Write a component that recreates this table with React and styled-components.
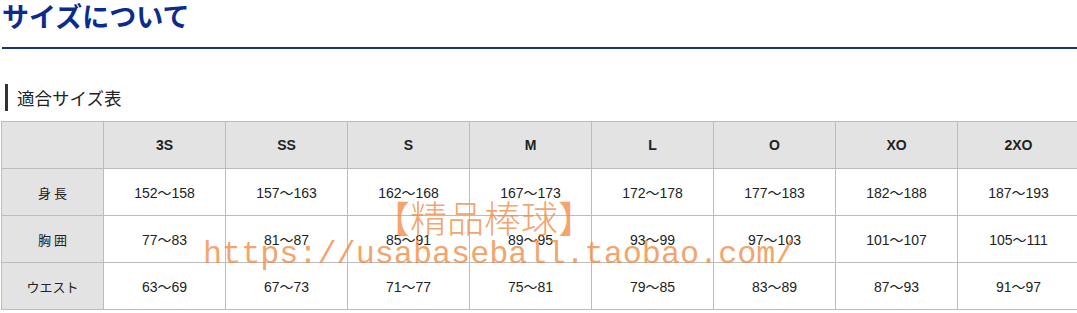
import React from "react";
import styled, { createGlobalStyle } from "styled-components";

const GlobalStyle = createGlobalStyle`
  html, body {
    margin: 0;
    padding: 0;
    background: #fff;
    overflow: hidden;
  }
  body {
    font-family: "Liberation Sans", "Noto Sans CJK JP", sans-serif;
  }
`;

const sizes = ["3S", "SS", "S", "M", "L", "O", "XO", "2XO"];

const rows = [
  {
    label: "身 長",
    values: ["152～158", "157～163", "162～168", "167～173", "172～178", "177～183", "182～188", "187～193"],
  },
  {
    label: "胸 囲",
    values: ["77～83", "81～87", "85～91", "89～95", "93～99", "97～103", "101～107", "105～111"],
  },
  {
    label: "ウエスト",
    values: ["63～69", "67～73", "71～77", "75～81", "79～85", "83～89", "87～93", "91～97"],
  },
];

const App = () => {
  return (
    <Page>
      <GlobalStyle />
      <Title>サイズについて</Title>
      <Rule />
      <SubTitle>適合サイズ表</SubTitle>
      <TableWrap>
        <SizeTable>
          <thead>
            <tr>
              <HeadCell $first />
              {sizes.map((s) => (
                <HeadCell key={s}>{s}</HeadCell>
              ))}
            </tr>
          </thead>
          <tbody>
            {rows.map((row) => (
              <tr key={row.label}>
                <LabelCell>{row.label}</LabelCell>
                {row.values.map((v, i) => (
                  <ValueCell key={i}>{v}</ValueCell>
                ))}
              </tr>
            ))}
          </tbody>
        </SizeTable>
        {/* shop watermark laid over the table */}
        <Watermark>
          <Shop>【精品棒球】</Shop>
          <Url>https://usabaseball.taobao.com/</Url>
        </Watermark>
      </TableWrap>
    </Page>
  );
};

export default App;

const Page = styled.div`
  width: 1077px;
  height: 313px;
  overflow: hidden;
`;
const Title = styled.h1`
  margin: 0;
  padding: 0 0 0 2px;
  height: 32px;
  line-height: 32px;
  font-family: "Noto Sans CJK JP", sans-serif;
  font-size: 27px;
  font-weight: 700;
  color: #0b2c8e;
`;
const Rule = styled.div`
  margin: 15px 0 0 2px;
  height: 2px;
  background: #16346f;
`;
const SubTitle = styled.h2`
  margin: 35px 0 0 5px;
  padding-left: 9px;
  height: 27px;
  line-height: 27px;
  border-left: 3px solid #333;
  font-family: "Noto Sans CJK JP", sans-serif;
  font-size: 17.5px;
  font-weight: 400;
  color: #222;
`;
const TableWrap = styled.div`
  position: relative;
  margin: 10px 0 0 1px;
  width: 1079px;
`;
const SizeTable = styled.table`
  border-collapse: collapse;
  table-layout: fixed;
  width: 1079px;
`;
const Cell = styled.td`
  border: 1px solid #bcbcbc;
  text-align: center;
  padding: 0;
  height: 46px;
`;
const HeadCell = styled(Cell).attrs({ as: "th" })`
  width: ${(p) => (p.$first ? "101px" : "121px")};
  height: 46px;
  background: #e3e3e3;
  font-size: 14px;
  font-weight: 700;
  color: #222;
`;
const LabelCell = styled(Cell)`
  background: #e3e3e3;
  font-family: "Noto Sans CJK JP", sans-serif;
  font-size: 13px;
  color: #222;
`;
const ValueCell = styled(Cell)`
  background: #fff;
  font-size: 14px;
  color: #222;
`;
const Watermark = styled.div`
  position: absolute;
  left: 0;
  top: 70px;
  width: 100%;
  pointer-events: none;
  color: rgba(240, 140, 70, 0.8);
`;
const Shop = styled.div`
  margin: 3px 0 0 372px;
  height: 43px;
  line-height: 46px;
  font-family: "Noto Sans CJK SC", sans-serif;
  font-size: 37px;
  font-weight: 300;
`;
const Url = styled.div`
  margin-left: 202px;
  line-height: 36px;
  font-family: "Liberation Mono", monospace;
  font-size: 31.8px;
`;
